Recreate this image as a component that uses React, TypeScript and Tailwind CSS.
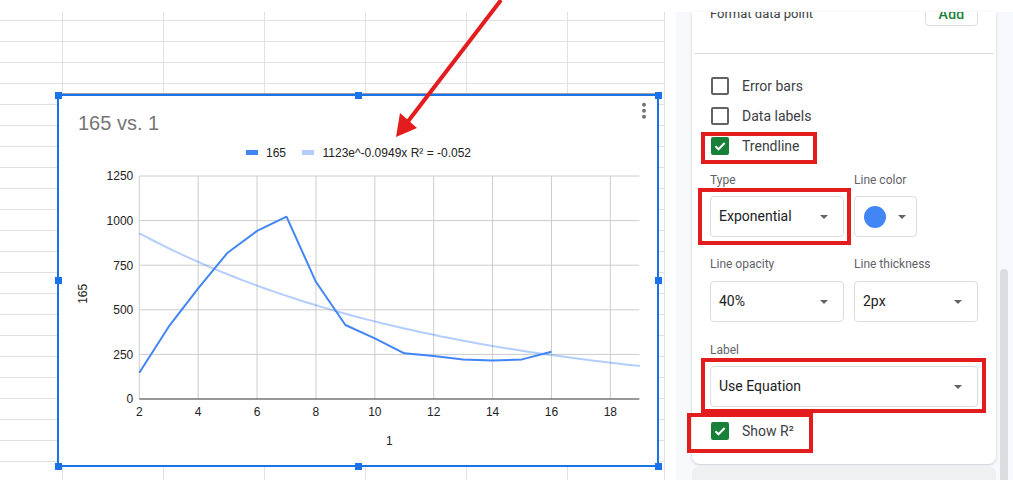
import React from 'react';

const SERIES = [147, 405, 620, 820, 942, 1022, 657, 415, 340, 256, 241, 222, 215, 222, 265];

const xPx = (v: number) => 139.3 + (v - 2) * 29.44;
const yPx = (v: number) => 399 - v * 0.1784;

const Caret: React.FC = () => (
  <svg width="8" height="4" viewBox="0 0 8 4" className="shrink-0">
    <polygon points="0,0 8,0 4,4" fill="#5f6368" />
  </svg>
);

const Checkbox: React.FC<{ label: string; checked?: boolean }> = ({ label, checked }) => (
  <div className="flex h-[30px] items-center gap-[13px] pl-[1px]">
    {checked ? (
      <span className="flex h-[18px] w-[18px] items-center justify-center rounded-[2px] bg-[#188038]">
        <svg width="14" height="14" viewBox="0 0 14 14">
          <path d="M2.5 7.3l3 3L11.6 4" fill="none" stroke="#fff" strokeWidth="2" />
        </svg>
      </span>
    ) : (
      <span className="h-[18px] w-[18px] rounded-[2px] border-2 border-[#5f6368]" />
    )}
    <span className="text-[14px] text-[#3c4043]">{label}</span>
  </div>
);

const Select: React.FC<{ value: string; className?: string }> = ({ value, className = '' }) => (
  <div
    className={`flex h-[41px] items-center justify-between rounded-[4px] border border-[#dadce0] bg-white pl-[8px] pr-[15px] ${className}`}
  >
    <span className="text-[14px] text-[#202124]">{value}</span>
    <Caret />
  </div>
);

const FieldLabel: React.FC<{ children: React.ReactNode }> = ({ children }) => (
  <div className="h-[16px] text-[12px] leading-4 text-[#5f6368]">{children}</div>
);

const Sheet: React.FC = () => {
  const cols = [0, 1, 2, 3, 4, 5, 6];
  const rows = Array.from({ length: 23 }, (_, i) => i);
  return (
    <div className="relative h-full w-[665px] overflow-hidden">
      <div className="grid grid-cols-[63px_101px_101px_101px_101px_101px_97px]">
        {rows.map((r) =>
          cols.map((c) => (
            <div
              key={`${r}-${c}`}
              className={`border-b border-r border-[#e1e1e1] ${r === 0 ? 'h-[9px]' : 'h-[21px]'}`}
            />
          ))
        )}
      </div>
      <Chart />
    </div>
  );
};

const Chart: React.FC = () => {
  const yTicks = [0, 250, 500, 750, 1000, 1250];
  const xTicks = [2, 4, 6, 8, 10, 12, 14, 16, 18];
  const data = SERIES.map((v, i) => `${xPx(i + 2).toFixed(1)},${yPx(v).toFixed(1)}`).join(' ');
  const trend: string[] = [];
  for (let x = 2; x <= 19.001; x += 0.25) {
    trend.push(`${xPx(x).toFixed(1)},${yPx(1123 * Math.exp(-0.0949 * x)).toFixed(1)}`);
  }

  return (
    <div className="absolute left-[57px] top-[82px] h-[373px] w-[602px] border-2 border-[#1a73e8] bg-white shadow-[0_-1px_0_#9aa0a6]">
      <svg
        className="absolute inset-0"
        width="598"
        height="369"
        viewBox="59 96 598 369"
        fontFamily="'Liberation Sans', Arial, sans-serif"
      >
        <text x="78" y="130" fontSize="20" fill="#757575">
          165 vs. 1
        </text>

        <circle cx="644" cy="104.7" r="2" fill="#757575" />
        <circle cx="644" cy="110.7" r="2" fill="#757575" />
        <circle cx="644" cy="116.7" r="2" fill="#757575" />

        {/* legend */}
        <rect x="246" y="150" width="12" height="5" fill="#4285f4" />
        <text x="266" y="156.6" fontSize="12" fill="#222">
          165
        </text>
        <rect x="302" y="150" width="12" height="5" fill="#b3cefb" />
        <text x="322.5" y="156.6" fontSize="12" fill="#222">
          1123e^-0.0949x R² = -0.052
        </text>

        {/* grid */}
        {yTicks.slice(1).map((t) => (
          <line key={t} x1="139.3" x2="639.3" y1={yPx(t)} y2={yPx(t)} stroke="#cccccc" strokeWidth="1" />
        ))}
        {xTicks.map((t) => (
          <line key={t} x1={xPx(t)} x2={xPx(t)} y1="176" y2="399" stroke="#cccccc" strokeWidth="1" />
        ))}
        <line x1="139.3" x2="639.3" y1="399" y2="399" stroke="#333" strokeWidth="1.2" />

        {yTicks.map((t) => (
          <text key={t} x="133.3" y={yPx(t) + 4.3} fontSize="12" fill="#222" textAnchor="end">
            {t}
          </text>
        ))}
        {xTicks.map((t) => (
          <text key={t} x={xPx(t)} y="415.7" fontSize="12" fill="#222" textAnchor="middle">
            {t}
          </text>
        ))}

        <text transform="translate(86.6 293.8) rotate(-90)" fontSize="12" fill="#222" textAnchor="middle">
          165
        </text>
        <text x="389.3" y="445.3" fontSize="12" fill="#222" textAnchor="middle">
          1
        </text>

        <polyline points={trend.join(' ')} fill="none" stroke="#4285f4" strokeOpacity="0.4" strokeWidth="2" />
        <polyline points={data} fill="none" stroke="#4285f4" strokeWidth="2" strokeLinejoin="round" />
      </svg>

      {/* selection handles */}
      <span className="absolute left-[-4px] top-[-4px] h-[7px] w-[7px] bg-[#1a73e8]" />
      <span className="absolute left-[296px] top-[-4px] h-[7px] w-[7px] bg-[#1a73e8]" />
      <span className="absolute left-[596px] top-[-4px] h-[7px] w-[7px] bg-[#1a73e8]" />
      <span className="absolute left-[-4px] top-[181px] h-[7px] w-[7px] bg-[#1a73e8]" />
      <span className="absolute left-[596px] top-[181px] h-[7px] w-[7px] bg-[#1a73e8]" />
      <span className="absolute left-[-4px] top-[367px] h-[7px] w-[7px] bg-[#1a73e8]" />
      <span className="absolute left-[296px] top-[367px] h-[7px] w-[7px] bg-[#1a73e8]" />
      <span className="absolute left-[596px] top-[367px] h-[7px] w-[7px] bg-[#1a73e8]" />
    </div>
  );
};

const Panel: React.FC = () => (
  <div className="flex flex-1 bg-[#f8f9fc]">
    <div className="flex flex-col pl-[16px]">
      <div className="flex w-[304px] flex-col overflow-hidden rounded-b-[8px] bg-white px-[18px] pb-[18px] shadow-[0_1px_3px_rgba(60,64,67,0.25)]">
        <div className="-mt-[10px] flex h-[24px] items-center justify-between">
          <span className="text-[13px] leading-5 text-[#3c4043]">Format data point</span>
          <button className="flex h-[24px] w-[53px] items-center justify-center rounded-[4px] border border-[#dadce0] text-[14px] font-medium tracking-[0.25px] text-[#188038]">
            Add
          </button>
        </div>
        <div className="-mx-[16px] mt-[27px] border-t border-[#dadce0]" />

        <div className="mt-[17px]">
          <Checkbox label="Error bars" />
          <Checkbox label="Data labels" />
          <Checkbox label="Trendline" checked />
        </div>

        <div className="mt-[11px] grid grid-cols-[134px_124px] gap-x-[10px]">
          <FieldLabel>Type</FieldLabel>
          <FieldLabel>Line color</FieldLabel>
          <Select value="Exponential" className="mt-[8px]" />
          <div className="mt-[8px] flex h-[41px] w-[63px] items-center justify-between rounded-[4px] border border-[#dadce0] pl-[9px] pr-[10px]">
            <span className="h-[22px] w-[22px] rounded-full bg-[#4285f4]" />
            <Caret />
          </div>

          <div className="mt-[19px]">
            <FieldLabel>Line opacity</FieldLabel>
          </div>
          <div className="mt-[19px]">
            <FieldLabel>Line thickness</FieldLabel>
          </div>
          <Select value="40%" className="mt-[9px]" />
          <Select value="2px" className="mt-[9px]" />
        </div>

        <div className="mt-[20px]">
          <FieldLabel>Label</FieldLabel>
        </div>
        <Select value="Use Equation" className="mt-[8px]" />

        <div className="mt-[9px]">
          <Checkbox label="Show R²" checked />
        </div>
      </div>
      <div className="mt-[3px] w-[304px] flex-1 rounded-t-[6px] bg-[#eff0f2]" />
    </div>
    <div className="flex w-[17px] flex-col pl-[4px]">
      <div className="mt-[257px] w-[8px] flex-1 rounded-t-full bg-[#dadce0]" />
    </div>
  </div>
);

export default function App() {
  return (
    <div className="relative h-[480px] w-[1013px] overflow-hidden bg-white font-['Roboto',sans-serif]">
      <div className="h-[12px]" />
      <div className="flex h-[468px]">
        <Sheet />
        <div className="w-[11px]" />
        <Panel />
      </div>

      {/* red annotation boxes */}
      <div className="pointer-events-none absolute left-[701px] top-[132px] h-[32px] w-[116px] border-4 border-[#e31d1d]" />
      <div className="pointer-events-none absolute left-[698px] top-[188px] h-[57px] w-[153px] border-4 border-[#e31d1d]" />
      <div className="pointer-events-none absolute left-[701px] top-[358px] h-[55px] w-[285px] border-4 border-[#e31d1d]" />
      <div className="pointer-events-none absolute left-[687px] top-[413px] h-[40px] w-[126px] border-4 border-[#e31d1d]" />

      {/* red arrow */}
      <svg className="pointer-events-none absolute left-0 top-0" width="1013" height="480">
        <line x1="501" y1="0" x2="406" y2="124" stroke="#e31d1d" strokeWidth="4" />
        <polygon points="396,137 400,113 417,128" fill="#e31d1d" />
      </svg>
    </div>
  );
}
